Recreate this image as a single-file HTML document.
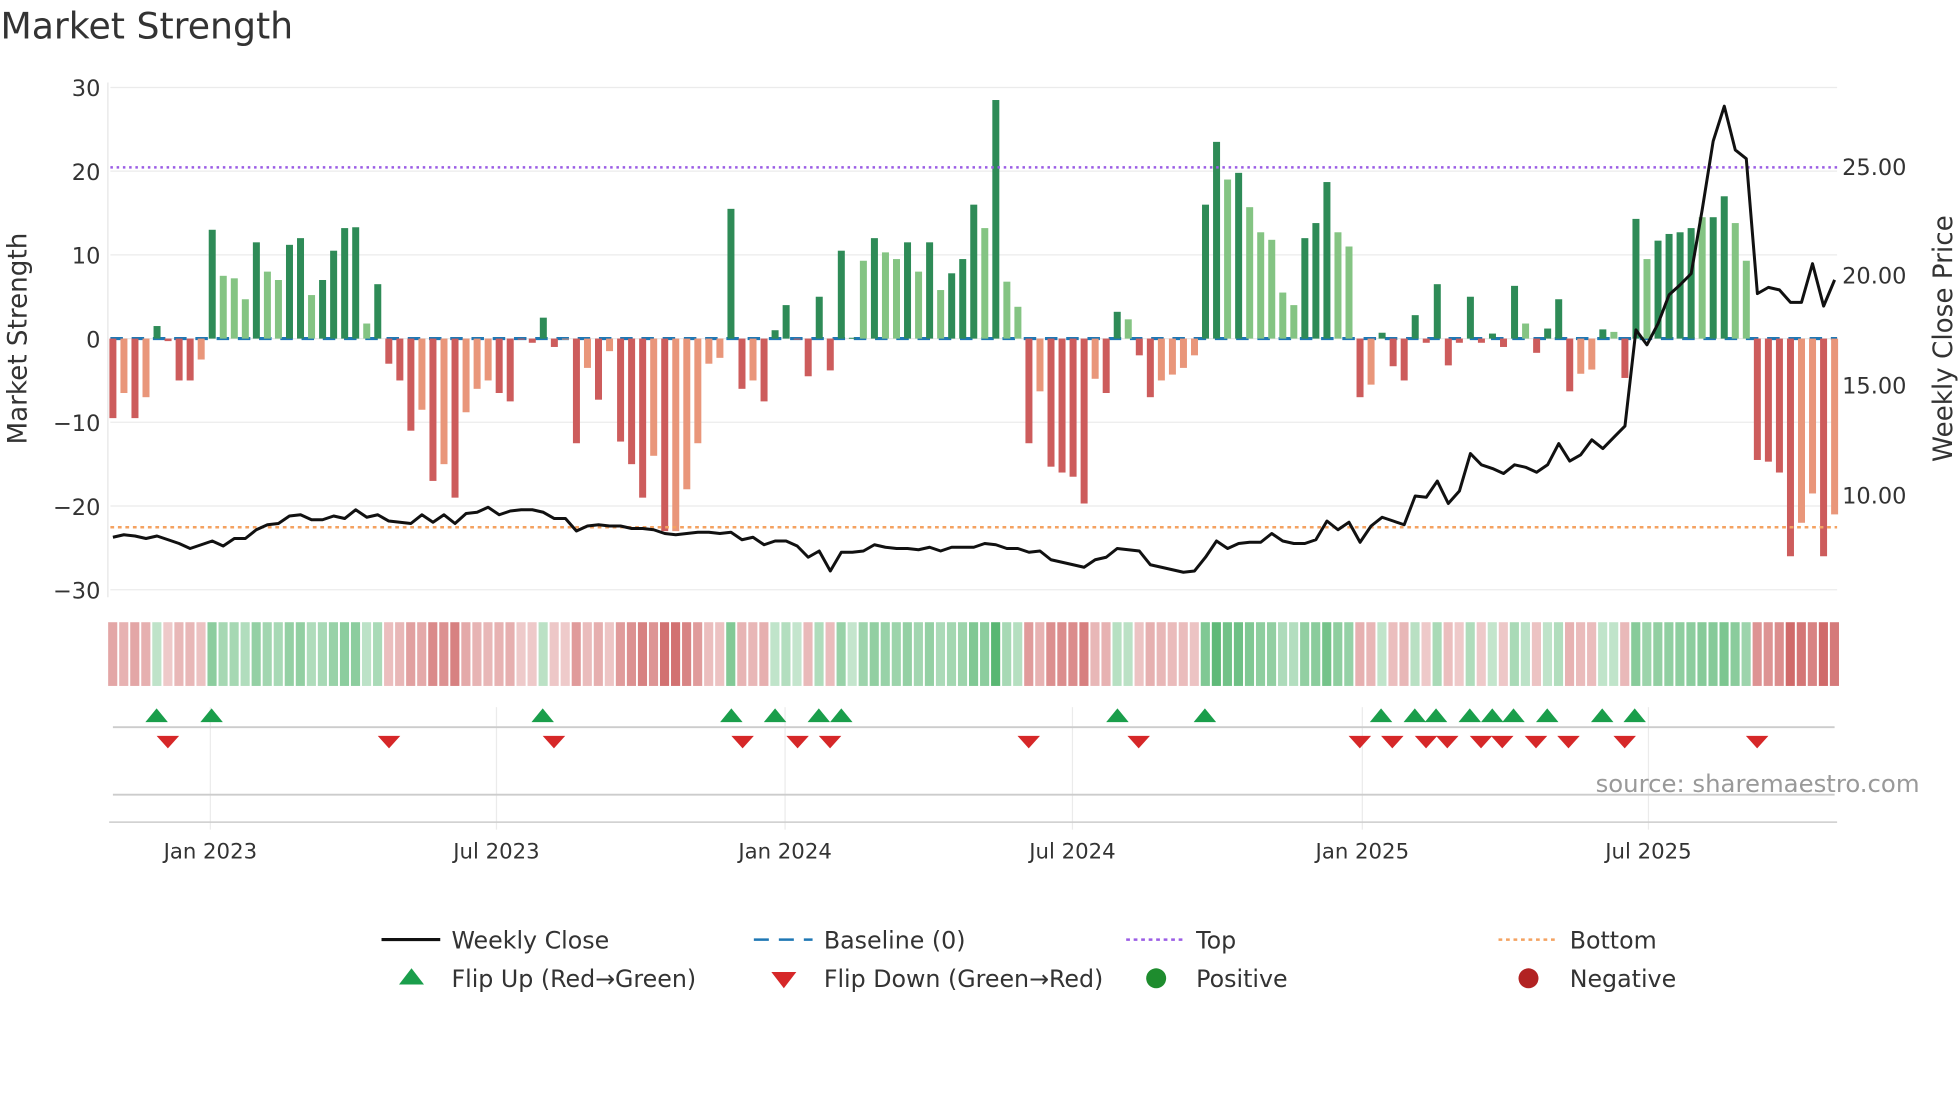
<!DOCTYPE html>
<html><head><meta charset="utf-8"><style>
html,body{margin:0;padding:0;background:#fff;}
svg{display:block;font-family:"DejaVu Sans","Liberation Sans",sans-serif;}
</style></head><body>
<svg id="s" width="1960" height="1102" viewBox="0 0 1568 882" xmlns="http://www.w3.org/2000/svg">
<rect width="1568" height="882" fill="#fff"/>
<text x="0" y="31" font-size="29" fill="#333">Market Strength</text>
<g id="grid" stroke="#ebebeb" stroke-width="1"></g>
<g id="bars"></g>
<g id="heat"></g>
<g font-size="18" fill="#333" text-anchor="end">
<text x="80" y="77">30</text><text x="80" y="144">20</text><text x="80" y="211">10</text>
<text x="80" y="278">0</text><text x="80" y="345">−10</text><text x="80" y="412">−20</text><text x="80" y="479">−30</text>
</g>
<g font-size="18" fill="#333">
<text x="1474" y="140">25.00</text><text x="1474" y="227">20.00</text><text x="1474" y="315">15.00</text><text x="1474" y="403">10.00</text>
</g>
<text transform="translate(21,271) rotate(-90)" font-size="21" fill="#333" text-anchor="middle">Market Strength</text>
<text transform="translate(1562,271) rotate(-90)" font-size="21" fill="#333" text-anchor="middle">Weekly Close Price</text>
<line x1="88" y1="134" x2="1470" y2="134" stroke="#9b5de5" stroke-width="2" stroke-dasharray="2,3"/>
<line x1="88" y1="422" x2="1470" y2="422" stroke="#f4a261" stroke-width="2" stroke-dasharray="3,3"/>
<polyline id="price" fill="none" stroke="#111" stroke-width="2.4" stroke-linejoin="round"/>
<line x1="90" y1="582" x2="1468" y2="582" stroke="#ccc" stroke-width="1.5"/>
<line x1="90" y1="636" x2="1468" y2="636" stroke="#ccc" stroke-width="1.5"/>
<line x1="87" y1="658" x2="1470" y2="658" stroke="#ccc" stroke-width="1.2"/>
<g id="marks"></g>
<text x="1536" y="634" font-size="19.5" fill="#999" text-anchor="end">source: sharemaestro.com</text>
<g font-size="17" fill="#333" text-anchor="middle">
<text x="168" y="687">Jan 2023</text><text x="397" y="687">Jul 2023</text><text x="628" y="687">Jan 2024</text>
<text x="858" y="687">Jul 2024</text><text x="1090" y="687">Jan 2025</text><text x="1319" y="687">Jul 2025</text>
</g>
<g font-size="19" fill="#333">
<line x1="305" y1="752" x2="352" y2="752" stroke="#111" stroke-width="2.5"/>
<text x="361" y="759">Weekly Close</text>
<line x1="603" y1="752" x2="650" y2="752" stroke="#1f77b4" stroke-width="2" stroke-dasharray="12,8"/>
<text x="659" y="759">Baseline (0)</text>
<line x1="901" y1="752" x2="948" y2="752" stroke="#9b5de5" stroke-width="2" stroke-dasharray="3,3"/>
<text x="957" y="759">Top</text>
<line x1="1199" y1="752" x2="1246" y2="752" stroke="#f4a261" stroke-width="2" stroke-dasharray="3,3"/>
<text x="1256" y="759">Bottom</text>
<polygon points="319,788 329,775 339,788" fill="#1a9e4b"/>
<text x="361" y="790">Flip Up (Red→Green)</text>
<polygon points="617,778 637,778 627,791" fill="#d62728"/>
<text x="659" y="790">Flip Down (Green→Red)</text>
<circle cx="925" cy="783" r="8" fill="#1e8c2e"/>
<text x="957" y="790">Positive</text>
<circle cx="1223" cy="783" r="8" fill="#b22222"/>
<text x="1256" y="790">Negative</text>
</g>
</svg>
<script>
var NS="http://www.w3.org/2000/svg";
function el(p,t,a){var e=document.createElementNS(NS,t);for(var k in a)e.setAttribute(k,a[k]);document.getElementById(p).appendChild(e);return e;}
[70,137,204,271,338,405,472].forEach(function(y){el("grid","line",{x1:88,y1:y,x2:1470,y2:y});});
el("grid","line",{x1:86,y1:66,x2:86,y2:478,stroke:"#e6e6e6"});
[168,397,628,858,1090,1319].forEach(function(x){el("grid","line",{x1:x,y1:566,x2:x,y2:664});});
var B=[[-9.5,1],[-6.5,0],[-9.5,1],[-7,0],[1.5,1],[-0.3,1],[-5,1],[-5,1],[-2.5,0],[13,1],[7.5,0],[7.2,0],[4.7,0],[11.5,1],[8,0],[7,0],[11.2,1],[12,1],[5.2,0],[7,1],[10.5,1],[13.2,1],[13.3,1],[1.8,0],[6.5,1],
[-3,1],[-5,1],[-11,1],[-8.5,0],[-17,1],[-15,0],[-19,1],[-8.8,0],[-6,0],[-5,0],[-6.5,1],[-7.5,1],[-0.1,1],[-0.5,1],[2.5,1],[-1,1],[-0.1,0],[-12.5,1],[-3.5,0],[-7.3,1],[-1.5,0],[-12.3,1],[-15,1],[-19,1],[-14,0],[-23,1],[-23,0],[-18,0],[-12.5,0],[-3,0],[-2.3,0],
[15.5,1],[-6,1],[-5,0],[-7.5,1],[1,1],[4,1],[-0.1,1],[-4.5,1],[5,1],[-3.8,1],[10.5,1],[0.1,1],[9.3,0],[12,1],[10.3,0],[9.5,0],[11.5,1],[8,0],[11.5,1],[5.8,0],[7.8,1],[9.5,1],[16,1],[13.2,0],[28.5,1],[6.8,0],[3.8,0],
[-12.5,1],[-6.3,0],[-15.3,1],[-16,1],[-16.5,1],[-19.7,1],[-4.8,0],[-6.5,1],[3.2,1],[2.3,0],[-2,1],[-7,1],[-5,0],[-4.3,0],[-3.5,0],[-2,0],
[16,1],[23.5,1],[19,0],[19.8,1],[15.7,0],[12.7,0],[11.8,0],[5.5,0],[4,0],[12,1],[13.8,1],[18.7,1],[12.7,0],[11,0],
[-7,1],[-5.5,0],[0.7,1],[-3.3,1],[-5,1],[2.8,1],[-0.5,1],[6.5,1],[-3.2,1],[-0.5,1],[5,1],[-0.5,1],[0.6,1],[-1,1],[6.3,1],[1.8,0],[-1.7,1],[1.2,1],[4.7,1],[-6.3,1],[-4.2,0],[-3.7,0],[1.1,1],[0.8,0],[-4.7,1],
[14.3,1],[9.5,0],[11.7,1],[12.5,1],[12.7,1],[13.2,1],[14.5,0],[14.5,1],[17,1],[13.8,0],[9.3,0],
[-14.5,1],[-14.7,1],[-16,1],[-26,1],[-22,0],[-18.5,0],[-26,1],[-21,0]];
var n=B.length, dx=(1468-90)/(n-1);
el("bars","line",{x1:88,y1:271,x2:1470,y2:271,stroke:"#1f77b4","stroke-width":2.5,"stroke-dasharray":"10,7"});
var prevSign=-1;
B.forEach(function(b,i){
 var x=90+i*dx, v=b[0], y0=271, h=Math.abs(v)*6.7;
 var c=v>=0?(b[1]?"#2e8b57":"#84c483"):(b[1]?"#cd5c5c":"#e9967a");
 el("bars","rect",{x:x-2.8,y:v>=0?y0-h:y0,width:5.6,height:Math.max(h,0.8),fill:c});
 var s=Math.abs(v)<0.2?prevSign:(v>0?1:-1); prevSign=s;
 var a=0.3+Math.min(Math.abs(v),25)/25*0.55;
 var hc=s>0?"rgba(60,170,90,"+a.toFixed(2)+")":"rgba(200,80,80,"+a.toFixed(2)+")";
 el("heat","rect",{x:x-3.8,y:498,width:7.3,height:51,fill:hc});
});
var P=[430,428,429,431,429,432,435,439,436,433,437,431,431,424,420,419,413,412,416,416,413,415,408,414,412,417,418,419,412,418,412,419,411,410,406,412,409,408,408,410,415,415,425,421,420,421,421,423,423,424,427,428,427,426,426,427,426,432,430,436,433,433,437,446,441,457,442,442,441,436,438,439,439,440,438,441,438,438,438,435,436,439,439,442,441,448,450,452,454,448,446,439,440,441,452,454,456,458,457,446,433,439,435,434,434,427,433,435,435,432,417,424,418,434,421,414,417,420,397,398,385,403,393,363,372,375,379,372,374,378,372,355,369,364,352,359,350,341,264,276,259,236,228,219,168,113,85,120,127,235,230,232,242,242,211,245,224];
var m=P.length, pdx=(1468-90)/(m-1), pts=[];
P.forEach(function(y,i){pts.push((90+i*pdx).toFixed(1)+","+y);});
document.getElementById("price").setAttribute("points",pts.join(" "));
[125,169,434,585,620,655,673,894,964,1105,1132,1149,1176,1194,1211,1238,1282,1308].forEach(function(x){
 el("marks","polygon",{points:(x-9)+",578 "+x+",567 "+(x+9)+",578",fill:"#1a9e4b"});});
[134,311,443,594,638,664,823,911,1088,1114,1141,1158,1185,1202,1229,1255,1300,1406].forEach(function(x){
 el("marks","polygon",{points:(x-9)+",589 "+(x+9)+",589 "+x+",599",fill:"#d62728"});});
</script>
</body></html>
